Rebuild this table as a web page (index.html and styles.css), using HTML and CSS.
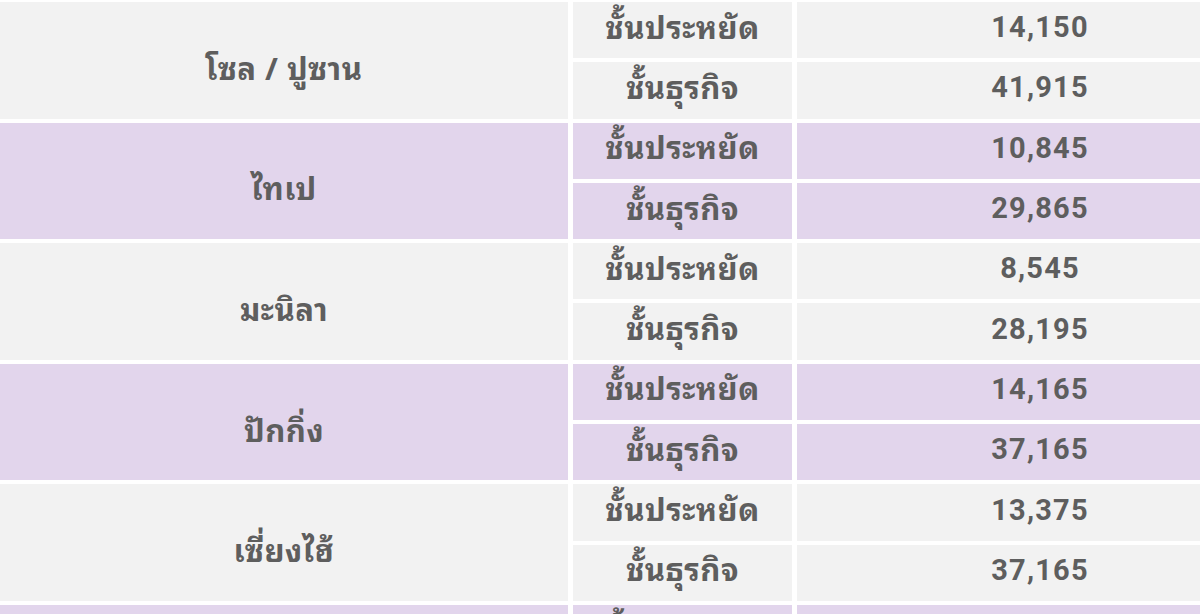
FILE: index.html
```html
<!DOCTYPE html>
<html lang="th">
<head>
<meta charset="utf-8">
<title>ค่าโดยสาร</title>
<link rel="stylesheet" href="styles.css">
</head>
<body>
<div class="fares">
  <div class="cell city gray">โซล / ปูซาน</div>
  <div class="cell cls gray">ชั้นประหยัด</div>
  <div class="cell price gray">14,150</div>
  <div class="cell cls gray">ชั้นธุรกิจ</div>
  <div class="cell price gray">41,915</div>

  <div class="cell city purple">ไทเป</div>
  <div class="cell cls purple">ชั้นประหยัด</div>
  <div class="cell price purple">10,845</div>
  <div class="cell cls purple">ชั้นธุรกิจ</div>
  <div class="cell price purple">29,865</div>

  <div class="cell city gray">มะนิลา</div>
  <div class="cell cls gray">ชั้นประหยัด</div>
  <div class="cell price gray">8,545</div>
  <div class="cell cls gray">ชั้นธุรกิจ</div>
  <div class="cell price gray">28,195</div>

  <div class="cell city purple">ปักกิ่ง</div>
  <div class="cell cls purple">ชั้นประหยัด</div>
  <div class="cell price purple">14,165</div>
  <div class="cell cls purple">ชั้นธุรกิจ</div>
  <div class="cell price purple">37,165</div>

  <div class="cell city gray">เซี่ยงไฮ้</div>
  <div class="cell cls gray">ชั้นประหยัด</div>
  <div class="cell price gray">13,375</div>
  <div class="cell cls gray">ชั้นธุรกิจ</div>
  <div class="cell price gray">37,165</div>

  <div class="cell city purple">ฮ่องกง</div>
  <div class="cell cls purple">ชั้นประหยัด</div>
  <div class="cell price purple">9,865</div>
  <div class="cell cls purple">ชั้นธุรกิจ</div>
  <div class="cell price purple">27,465</div>
</div>
</body>
</html>
```

FILE: styles.css
```css
html, body {
  margin: 0;
  padding: 0;
  background: #ffffff;
  overflow: hidden;
}

body {
  font-family: Roboto, "Noto Sans Thai", "Noto Sans", sans-serif;
  font-weight: 700;
  color: #5e5e5e;
}

.fares {
  display: grid;
  grid-template-columns: 568px 219px 486px;
  grid-auto-rows: 56.3px;
  column-gap: 5px;
  row-gap: 4px;
  padding-top: 2px;
  width: 1283px;
}

.cell {
  display: flex;
  align-items: center;
  justify-content: center;
  line-height: 1;
  white-space: nowrap;
}

.city,
.cls {
  font-family: "Noto Sans Thai Looped", "Loma", "Garuda", "Tahoma", "Noto Sans Thai", sans-serif;
  font-size: 31px;
  letter-spacing: 0.5px;
}

.price {
  font-family: Roboto, "Liberation Sans", sans-serif;
  font-size: 29px;
  letter-spacing: 1.2px;
  padding-bottom: 5px;
}

.city {
  grid-row: span 2;
  grid-column: 1;
  padding-top: 12px;
}

.cls {
  padding-bottom: 10px;
}

.gray {
  background: #f2f2f2;
}

.purple {
  background: #e2d5ec;
}
```
